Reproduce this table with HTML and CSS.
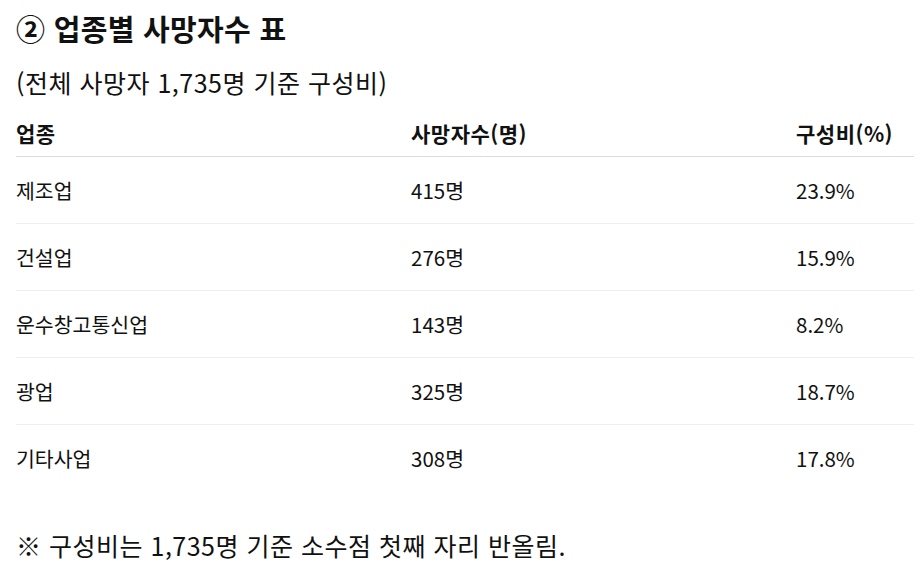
FILE: index.html
```html
<!DOCTYPE html>
<html lang="ko">
<head>
<meta charset="utf-8">
<link rel="stylesheet" href="styles.css">
</head>
<body>
<h2 class="title">② 업종별 사망자수 표</h2>
<p class="sub">(전체 사망자 1,735명 기준 구성비)</p>
<table class="tbl">
  <thead>
    <tr><th class="c1">업종</th><th class="c2">사망자수(명)</th><th class="c3">구성비(%)</th></tr>
  </thead>
  <tbody>
    <tr><td>제조업</td><td>415명</td><td>23.9%</td></tr>
    <tr><td>건설업</td><td>276명</td><td>15.9%</td></tr>
    <tr><td>운수창고통신업</td><td>143명</td><td>8.2%</td></tr>
    <tr><td>광업</td><td>325명</td><td>18.7%</td></tr>
    <tr><td>기타사업</td><td>308명</td><td>17.8%</td></tr>
  </tbody>
</table>
<p class="note">※ 구성비는 1,735명 기준 소수점 첫째 자리 반올림.</p>
</body>
</html>
```
FILE: styles.css
```css
html, body { margin: 0; padding: 0; background: #fff; }
body {
  padding-left: 16px;
  font-family: "Noto Sans CJK KR", "Noto Sans", sans-serif;
  color: #111;
  overflow: hidden;
}
.title {
  margin: 0;
  padding-top: 10px;
  font-size: 29px;
  line-height: 36px;
  font-weight: 700;
  letter-spacing: 0.3px;
}
.sub {
  margin: 20px 0 0;
  font-size: 25px;
  line-height: 32px;
  letter-spacing: 0.5px;
}
.tbl {
  width: 898px;
  border-collapse: collapse;
  margin-top: 12px;
  table-layout: fixed;
}
.c1 { width: 395px; }
.c2 { width: 385px; }
.tbl th {
  text-align: left;
  font-size: 21px;
  font-weight: 700;
  line-height: 26px;
  padding: 10px 0;
  letter-spacing: 0.5px;
  border-bottom: 1px solid #dcdcdc;
}
.tbl td {
  font-size: 20.5px;
  line-height: 26px;
  padding: 20px 0;
  border-bottom: 1px solid #eee;
}
.tbl tbody tr:last-child td { border-bottom: none; }
.note {
  margin: 38px 0 0;
  font-size: 25px;
  line-height: 32px;
  letter-spacing: 0.5px;
}
```
